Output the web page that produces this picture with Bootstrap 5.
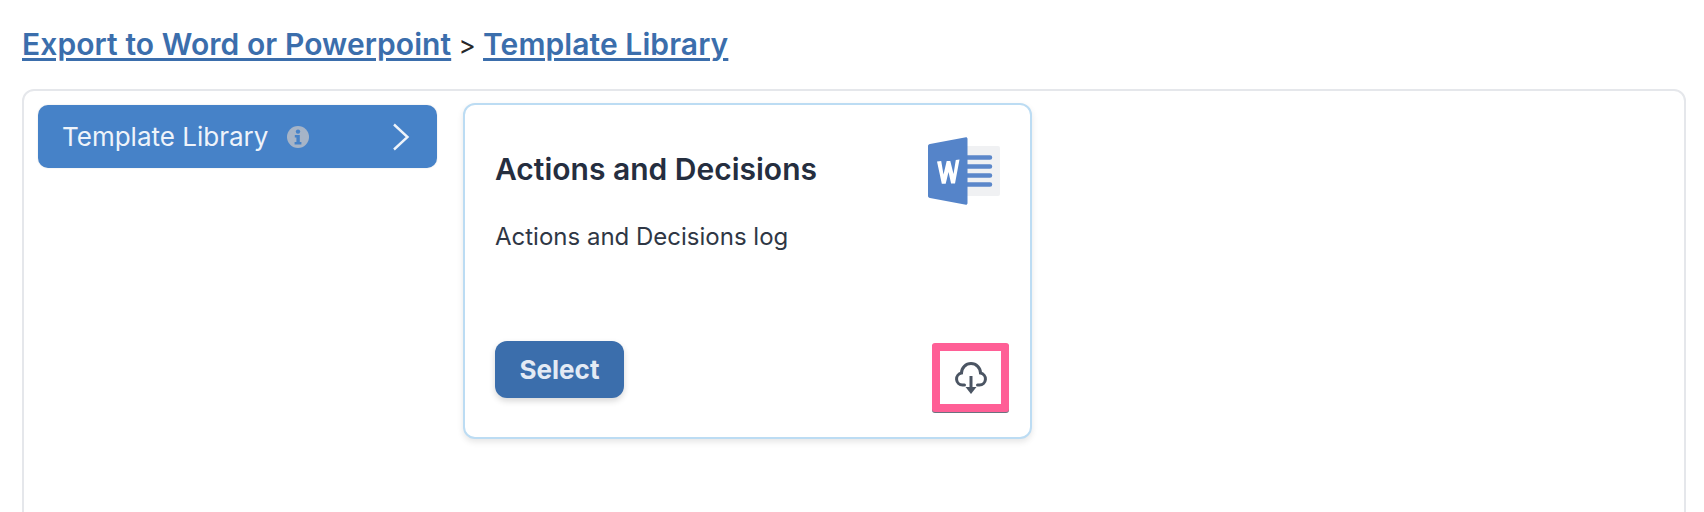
<!DOCTYPE html>
<html lang="en">
<head>
<meta charset="utf-8">
<title>Template Library</title>
<link href="https://cdn.jsdelivr.net/npm/bootstrap@5.3.0/dist/css/bootstrap.min.css" rel="stylesheet">
<style>
html, body { height: 512px; overflow: hidden; }
body { font-family: Inter, "Liberation Sans", sans-serif; color: #1f2937; background: #fff; padding: 24px 18px 0 22px; }
.crumb-line { font-size: 26px; line-height: 40px; margin-bottom: 25px; height: 40px; color: #27272a; }
.crumb-line a { color: #3b6eac; font-size: 30px; font-weight: 600; letter-spacing: .08px; text-underline-offset: 3px; }
.outer-panel { border: 2px solid #e5e7eb; border-radius: 12px; height: 500px; padding: 14px 14px; gap: 26px; }
.side-tab { width: 399px; height: 63px; background: #4682c8; color: #eef3fa; border-radius: 10px; font-size: 26px; padding: 0 27px 0 24px; box-shadow: 0 0 2px rgba(0,0,0,.12); }
.side-info { margin-left: 19px; }
.tpl-card { width: 569px; height: 336px; margin-top: -2px; border: 2px solid #bcdcf3; border-radius: 12px; padding: 30px 30px 0 30px; box-shadow: 0 3px 6px rgba(0,0,0,.1); }
.tpl-title { font-size: 30px; font-weight: 600; color: #252e3f; line-height: 36px; margin: 16px 0 0; }
.tpl-desc { font-size: 24px; line-height: 30px; color: #2f3745; margin: 19px 0 0; }
.tpl-head { height: 68px; }
.tpl-foot { margin-top: auto; padding-bottom: 25px; }
.select-btn { background: #3b6eac; color: #e3eaf4; border: 0; width: 129px; height: 57px; margin-bottom: 14px; font-size: 26px; font-weight: 700; border-radius: 12px; box-shadow: 0 3px 6px rgba(0,0,0,.16); }
.select-btn:hover { background: #3b6eac; color: #e3eaf4; }
.dl-btn { width: 77px; height: 69px; border: 8px solid #ff5f96; border-radius: 3px; background: #fff; padding: 0; margin-right: -9px; box-shadow: 0 1px 0 #6b7280; }
.word-mark { margin-top: 2px; }
</style>
</head>
<body>
<div class="crumb-line"><a href="#">Export to Word or Powerpoint</a> &gt; <a href="#">Template Library</a></div>
<div class="outer-panel d-flex align-items-start bg-white">
  <div class="side-tab d-flex align-items-center">
    <span>Template Library</span>
    <svg class="side-info" width="22" height="22" viewBox="0 0 22 22" aria-hidden="true"><circle cx="11" cy="11" r="11" fill="#a6b4c7"/><circle cx="11" cy="5.600" r="2.200" fill="#4682c8"/><path d="M7.800 9h5v7h1.600v2.400H7.600V16h1.800v-4.600H7.800z" fill="#4682c8"/></svg>
    <svg class="ms-auto" width="18" height="28" viewBox="0 0 18 28" aria-hidden="true"><path d="M2 1.500 15.500 14 2 26.500" fill="none" stroke="#eef3fa" stroke-width="2.400"/></svg>
  </div>
  <div class="tpl-card d-flex flex-column bg-white">
    <div class="tpl-head d-flex justify-content-between align-items-start">
      <h2 class="tpl-title">Actions and Decisions</h2>
      <svg class="word-mark" width="72" height="68" viewBox="0 0 72 68" aria-hidden="true">
        <rect x="28" y="9" width="44" height="50" rx="2" fill="#f0f1f3"/>
        <g stroke="#5b87ca" stroke-width="4.500" stroke-linecap="round"><path d="M38 20.500h24M38 29.500h24M38 38.500h24M38 47.500h24"/></g>
        <path d="M2 7 38 .3c.8 0 1.500.6 1.500 1.500v64.400c0 .9-.7 1.500-1.500 1.500L2 61c-1.200-.2-2-1-2-2V9c0-1 .8-1.800 2-2z" fill="#5584c9"/>
        <path d="M9 24.500 13.200 24l2.300 13.500 3.200-13.500h3.600l3.200 13 2.300-14 3.700-.5-4.500 24h-3.900l-2.600-11.500-2.800 11.800h-3.900z" fill="#fff"/>
      </svg>
    </div>
    <p class="tpl-desc">Actions and Decisions log</p>
    <div class="tpl-foot d-flex justify-content-between align-items-end">
      <button type="button" class="btn select-btn p-0">Select</button>
      <button type="button" class="btn dl-btn d-flex align-items-center justify-content-center" aria-label="Download">
        <svg width="32" height="34" viewBox="0 0 32 34" aria-hidden="true"><path d="M9.500 24H7.500A6 6 0 0 1 6.500 12.100 9.500 9.500 0 0 1 25.500 12.100 6 6 0 0 1 24.500 24H22.500" fill="none" stroke="#4b5563" stroke-width="3" stroke-linecap="round"/><path d="M16 15v15" stroke="#4b5563" stroke-width="3"/><path d="M10.500 26h11L16 33z" fill="#4b5563"/></svg>
      </button>
    </div>
  </div>
</div>
<script src="https://cdn.jsdelivr.net/npm/bootstrap@5.3.0/dist/js/bootstrap.bundle.min.js"></script>
</body>
</html>
